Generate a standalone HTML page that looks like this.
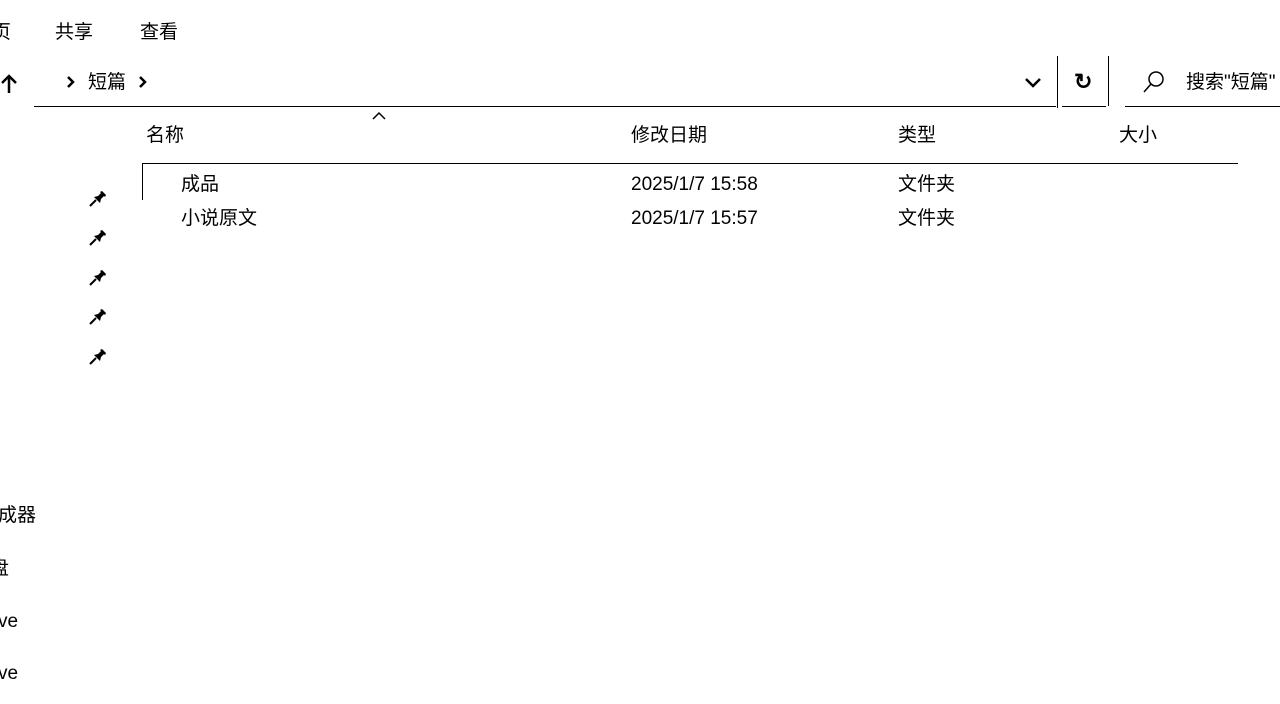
<!DOCTYPE html>
<html><head><meta charset="utf-8"><style>
body{margin:0;width:1280px;height:704px;background:#fff;overflow:hidden;position:relative;font-family:"Liberation Sans","Noto Sans CJK SC",sans-serif;color:#000;font-size:19px}
.a{position:absolute;white-space:nowrap;line-height:1}
.l{position:absolute;background:#000}
</style></head><body>
<div class="a" style="left:-8px;top:23px">页</div>
<div class="a" style="left:55px;top:23px">共享</div>
<div class="a" style="left:140px;top:23px">查看</div>
<svg class="a" style="left:0;top:73px" width="18" height="22"><path d="M9 20V3M2 10L9 3L16 10" stroke="#000" stroke-width="2.5" fill="none"/></svg>
<svg class="a" style="left:66px;top:75px" width="10" height="14"><path d="M2 2L7 7L2 12" stroke="#000" stroke-width="2.5" fill="none"/></svg>
<div class="a" style="left:88px;top:73px">短篇</div>
<svg class="a" style="left:138px;top:75px" width="10" height="14"><path d="M2 2L7 7L2 12" stroke="#000" stroke-width="2.5" fill="none"/></svg>
<div class="l" style="left:34px;top:106px;width:1022px;height:1px"></div>
<svg class="a" style="left:1024px;top:77px" width="18" height="12"><path d="M2 2L9 9L16 2" stroke="#000" stroke-width="2.5" fill="none"/></svg>
<div class="l" style="left:1057px;top:56px;width:1px;height:52px"></div>
<div class="l" style="left:1062px;top:106px;width:44px;height:1px"></div>
<div class="a" style="left:1074px;top:71px;font-size:22px;font-weight:bold">↻</div>
<div class="l" style="left:1108px;top:56px;width:1px;height:50px"></div>
<div class="l" style="left:1125px;top:106px;width:160px;height:1px"></div>
<svg class="a" style="left:1142px;top:70px" width="24" height="24"><circle cx="14" cy="9" r="7" stroke="#000" stroke-width="1.5" fill="none"/><path d="M9 14L2 22" stroke="#000" stroke-width="1.5"/></svg>
<div class="a" style="left:1186px;top:73px">搜索"短篇"</div>
<svg class="a" style="left:371px;top:111px" width="16" height="10"><path d="M2 8L8 2L14 8" stroke="#000" stroke-width="1.5" fill="none"/></svg>
<div class="a" style="left:146px;top:126px">名称</div>
<div class="a" style="left:631px;top:126px">修改日期</div>
<div class="a" style="left:898px;top:126px">类型</div>
<div class="a" style="left:1119px;top:126px">大小</div>
<div class="l" style="left:142px;top:163px;width:1096px;height:1px"></div>
<div class="l" style="left:142px;top:163px;width:1px;height:37px"></div>
<div class="a" style="left:-6px;top:150px">]</div>
<div class="a" style="left:181px;top:175px">成品</div>
<div class="a" style="left:631px;top:175px">2025/1/7 15:58</div>
<div class="a" style="left:898px;top:175px">文件夹</div>
<div class="a" style="left:181px;top:209px">小说原文</div>
<div class="a" style="left:631px;top:209px">2025/1/7 15:57</div>
<div class="a" style="left:898px;top:209px">文件夹</div>
<svg class="a" style="left:88px;top:189px" width="20" height="180">
<g id="p"><path d="M2 17L8 11" stroke="#000" stroke-width="2"/><path d="M6 8L12 14L13 10L16 7L17 8L18 6L14 2L12 3L13 4L10 7Z" fill="#000"/></g>
<use href="#p" y="39"/><use href="#p" y="79"/><use href="#p" y="118"/><use href="#p" y="158"/>
</svg>
<div class="a" style="left:-2px;top:506px">成器</div>
<div class="a" style="left:-10px;top:559px">盘</div>
<div class="a" style="left:-2px;top:612px">ve</div>
<div class="a" style="left:-2px;top:664px">ve</div>
</body></html>
